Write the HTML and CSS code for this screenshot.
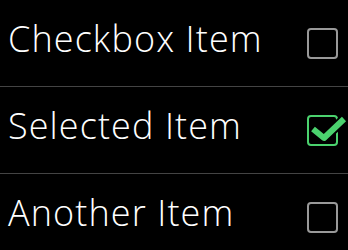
FILE: index.html
```html
<!DOCTYPE html>
<html lang="en">
<head>
    <meta charset="UTF-8">
    <meta name="viewport" content="width=device-width, initial-scale=1.0">
    <title>Checkbox List</title>
    <link rel="stylesheet" href="styles.css">
</head>
<body>

    <!-- Checkbox list -->
    <div class="list">
        <div class="list-item">
            <span class="item-label">Checkbox Item</span>
            <span class="checkbox"></span>
        </div>
        <div class="list-item">
            <span class="item-label">Selected Item</span>
            <span class="checkbox checked">
                <svg class="check-mark" width="40" height="36" viewBox="0 0 40 36">
                    <path d="M4 16 L15 25 L35 6" fill="none" stroke="#000" stroke-width="10" stroke-linejoin="round"/>
                    <path d="M4 16 L15 25 L35 6" fill="none" stroke="#4bd26e" stroke-width="6" stroke-linejoin="round"/>
                </svg>
            </span>
        </div>
        <div class="list-item">
            <span class="item-label">Another Item</span>
            <span class="checkbox"></span>
        </div>
    </div>

</body>
</html>
```

FILE: styles.css
```css
/* Reset default margin/padding */
* {
    margin: 0;
    padding: 0;
    box-sizing: border-box;
}

body {
    font-family: "Open Sans", sans-serif;
    background-color: #000;
    color: #fff;
    overflow: hidden;
}

.list-item {
    height: 87px;
    display: flex;
    align-items: center;
    justify-content: space-between;
    padding: 0 10px 0 8px;
    border-bottom: 1px solid #444;
}

.item-label {
    font-size: 36px;
    font-weight: 300;
    letter-spacing: 1.1px;
    margin-top: -9px;
}

/* Checkbox square */
.checkbox {
    width: 31px;
    height: 31px;
    border: 2px solid #999;
    border-radius: 4px;
    position: relative;
}

.checkbox.checked {
    border-color: #4bd26e;
}

.check-mark {
    position: absolute;
    left: 0;
    top: -4px;
}
```
